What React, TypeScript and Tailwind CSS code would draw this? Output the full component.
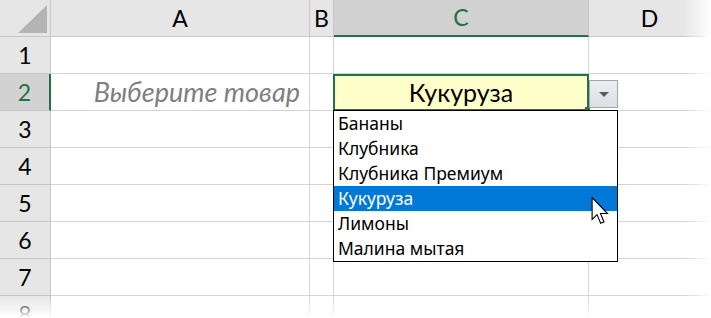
import React from 'react';

const cols = ['A', 'B', 'C', 'D'];
const rows = [1, 2, 3, 4, 5, 6, 7, 8];
const items = ['Бананы', 'Клубника', 'Клубника Премиум', 'Кукуруза', 'Лимоны', 'Малина мытая'];

const App = () => {
  return (
    <div className="relative w-[711px] h-[318px] overflow-hidden bg-white font-['Lato','Noto_Sans',sans-serif] text-black">
      <div className="grid grid-cols-[51px_259px_24px_255px_1fr] grid-rows-[37px_repeat(8,37px)]">
        {/*corner*/}
        <div className="relative bg-[#e6e6e6] border-r border-b border-[#c6c6c6]">
          <svg className="absolute left-0 top-0" width="50" height="36">
            <polygon points="18,33 47,33 47,5" fill="#b4b4b4" />
          </svg>
        </div>
        {/*column headers*/}
        {cols.map((c) => (
          <div
            key={c}
            className={
              c === 'C'
                ? 'flex items-center justify-center bg-[#d2d2d2] border-r border-[#c6c6c6] border-b-2 border-b-[#217346] text-[#217346] text-[23px]'
                : 'flex items-center justify-center bg-[#e6e6e6] border-r border-b border-[#c6c6c6] text-[23px]'
            }
          >
            {c}
          </div>
        ))}
        {/*rows*/}
        {rows.map((r) => (
          <React.Fragment key={r}>
            <div
              className={
                r === 2
                  ? 'flex items-center justify-center bg-[#d2d2d2] border-b border-[#c6c6c6] border-r-2 border-r-[#217346] text-[#217346] text-[23px]'
                  : 'flex items-center justify-center bg-[#e6e6e6] border-r border-b border-[#c6c6c6] text-[23px]'
              }
            >
              {r}
            </div>
            <div className="flex items-center justify-end pr-[9px] border-r border-b border-[#d4d4d4] italic text-[#7f7f7f] text-[27px]">
              {r === 2 ? 'Выберите товар' : ''}
            </div>
            <div className="border-r border-b border-[#d4d4d4]" />
            {r === 2 ? (
              <div className="relative -ml-px flex items-center justify-center bg-[#ffffcc] border-2 border-[#217346] text-[25px]">
                Кукуруза
                <div className="absolute -right-[3px] -bottom-[3px] w-[5px] h-[5px] bg-[#217346]" />
              </div>
            ) : (
              <div className="border-r border-b border-[#d4d4d4]" />
            )}
            <div className="border-b border-[#d4d4d4]" />
          </React.Fragment>
        ))}
      </div>

      {/*dropdown button*/}
      <div className="absolute left-[589px] top-[80px] w-[29px] h-[28px] border border-[#a3a5a9] bg-gradient-to-b from-[#eceef1] to-[#dcdfe4] flex items-center justify-center">
        <svg width="10" height="5">
          <polygon points="0,0 10,0 5,5" fill="#5a5a5a" />
        </svg>
      </div>

      {/*dropdown list*/}
      <div className="absolute left-[333px] top-[110px] w-[285px] h-[152px] border border-black bg-white font-['Noto_Sans','Open_Sans',sans-serif] text-[17.5px]">
        {items.map((it) => (
          <div
            key={it}
            className={
              it === 'Кукуруза'
                ? 'h-[25px] pl-[4px] leading-[25px] bg-[#0078d7] text-white'
                : 'h-[25px] pl-[4px] leading-[25px]'
            }
          >
            {it}
          </div>
        ))}
      </div>

      {/*cursor*/}
      <svg className="absolute left-[591px] top-[197px]" width="19" height="28" viewBox="0 0 13 20">
        <path
          d="M0.5,0.5 L0.5,16 L4,12.6 L6.6,18.8 L9,17.8 L6.5,11.8 L11.5,11.8 Z"
          fill="white"
          stroke="black"
          strokeWidth="0.8"
          strokeLinejoin="miter"
        />
      </svg>

      {/*fades*/}
      <div className="pointer-events-none absolute right-0 top-0 h-full w-[28px] bg-gradient-to-r from-transparent to-white" />
      <div className="pointer-events-none absolute left-0 bottom-0 w-full h-[22px] bg-gradient-to-b from-transparent to-white" />
    </div>
  );
};

export default App;
